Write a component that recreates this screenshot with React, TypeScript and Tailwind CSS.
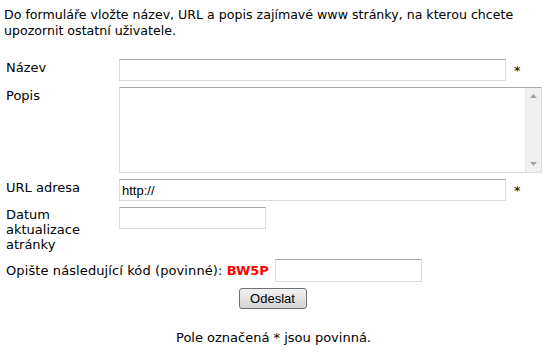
import { useState } from 'react';

const inputCls =
  'h-[22px] border border-[#d9dce3] border-t-[#a9a9a9] bg-white px-[2px] text-[13px] font-["Liberation_Sans",Arial,sans-serif] outline-none';

export default function App() {
  const [url, setUrl] = useState('http://');

  return (
    <div className="min-h-[359px] w-[547px] bg-white pl-[4px] pt-[7px] font-['DejaVu_Sans',Verdana,sans-serif] text-[13px] leading-[16px] text-black">
      {/* Intro */}
      <p className="text-[12.6px]">
        Do formuláře vložte název, URL a popis zajímavé www stránky, na kterou chcete upozornit ostatní uživatele.
      </p>

      {/* Form */}
      <form className="mt-[20px] flex flex-col gap-[6px] pl-[2px]">
        <div className="grid grid-cols-[113px_387px_auto] items-start">
          <label className="pt-[1px]">Název</label>
          <input className={`${inputCls} w-[387px]`} />
          <span className="pl-[8px] pt-[4px]">*</span>
        </div>

        <div className="grid grid-cols-[113px_423px] items-start">
          <label className="pt-[1px]">Popis</label>
          <div className="flex h-[86px] w-[423px] border border-[#d9dce3] border-t-[#a9a9a9] bg-white">
            <textarea className="h-full flex-1 resize-none overflow-hidden bg-white outline-none" />
            {/* scrollbar */}
            <div className="flex w-[16px] flex-col items-center justify-between border-l border-[#e6e6e6] bg-[#f0f0f0] py-[6px]">
              <svg width="7" height="4" viewBox="0 0 7 4">
                <path d="M3.5 0 L7 4 L0 4 Z" fill="#a3a3a3" />
              </svg>
              <svg width="7" height="4" viewBox="0 0 7 4">
                <path d="M0 0 L7 0 L3.5 4 Z" fill="#a3a3a3" />
              </svg>
            </div>
          </div>
        </div>

        <div className="grid grid-cols-[113px_387px_auto] items-start">
          <label className="pt-[1px]">URL adresa</label>
          <input
            className={`${inputCls} w-[387px]`}
            value={url}
            onChange={(e) => setUrl(e.target.value)}
          />
          <span className="pl-[8px] pt-[4px]">*</span>
        </div>

        <div className="grid h-[46px] grid-cols-[113px_147px] items-start">
          <label className="leading-[15px]">
            Datum
            <br />
            aktualizace
            <br />
            atránky
          </label>
          <input className={`${inputCls} w-[147px]`} />
        </div>

        <div className="flex h-[23px] items-center">
          <span className="tracking-[0.1px]">
            Opište následující kód (povinné):{' '}
            <b className="font-bold tracking-normal text-[#ff0000]">BW5P</b>
          </span>
          <input className={`${inputCls} ml-[6px] h-[23px] w-[147px]`} />
        </div>

        <div className="flex justify-center pr-[8px]">
          <button
            type="button"
            className="h-[21px] w-[68px] rounded-[3px] border border-[#707070] bg-gradient-to-b from-[#f2f2f2] to-[#d4d4d4] font-['Liberation_Sans',Arial,sans-serif] text-[13px] leading-[19px] text-black"
          >
            Odeslat
          </button>
        </div>
      </form>

      <p className="mt-[21px] pr-[4px] text-center">Pole označená * jsou povinná.</p>
    </div>
  );
}
